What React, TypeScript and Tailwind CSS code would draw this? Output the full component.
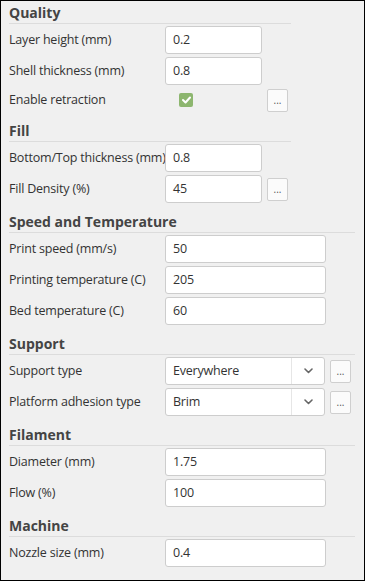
import { ReactNode } from 'react'

const font = { fontFamily: '"Open Sans", "Noto Sans", sans-serif' }

function Section({ title, first, wide, children }: { title: string; first?: boolean; wide?: boolean; children: ReactNode }) {
  return (
    <div className={wide ? 'w-[346px]' : 'w-[282px]'}>
      <div
        className={`${first ? 'h-[23px]' : 'h-[30px]'} flex items-end border-b border-[#dcdcdc] text-[14px] leading-[20px] font-bold text-[#444]`}
      >
        {title}
      </div>
      <div className="flex flex-col gap-[3px] pt-[2px]">{children}</div>
    </div>
  )
}

function DotsButton() {
  return (
    <button className="ml-[5px] flex h-[23px] w-[21px] items-center justify-center rounded-[2px] border border-[#cfcfcf] bg-[#fbfbfb] text-[10px] leading-none text-[#555]">
      ...
    </button>
  )
}

function Label({ text }: { text: string }) {
  return <div className="w-[156px] shrink-0 whitespace-nowrap text-[12.5px] tracking-[-0.2px] text-[#333]">{text}</div>
}

function Row({ label, children }: { label: string; children: ReactNode }) {
  return (
    <div className="flex h-[28px] items-center">
      <Label text={label} />
      {children}
    </div>
  )
}

function TextField({ value, wide }: { value: string; wide?: boolean }) {
  return (
    <div
      className={`${wide ? 'w-[161px]' : 'w-[97px]'} flex h-[28px] items-center rounded-[3px] border border-[#cdcdcd] bg-white px-[7px] text-[12.5px] tracking-[-0.2px] text-[#333]`}
    >
      {value}
    </div>
  )
}

function SelectField({ value }: { value: string }) {
  return (
    <div className="flex h-[28px] w-[160px] items-center rounded-[3px] border border-[#cdcdcd] bg-white text-[12.5px] tracking-[-0.2px] text-[#333]">
      <div className="flex-1 px-[7px]">{value}</div>
      <div className="flex h-full w-[33px] items-center justify-center border-l border-[#e6e6e6]">
        <svg width="9" height="6" viewBox="0 0 9 6" fill="none" stroke="#666" strokeWidth="1.6">
          <path d="M1 1l3.5 3.5L8 1" strokeLinecap="round" strokeLinejoin="round" />
        </svg>
      </div>
    </div>
  )
}

export default function App() {
  return (
    <div className="h-[581px] w-[365px] border border-black bg-[#f0f0f0] pl-[8px]" style={font}>
      <Section title="Quality" first>
        <Row label="Layer height (mm)">
          <TextField value="0.2" />
        </Row>
        <Row label="Shell thickness (mm)">
          <TextField value="0.8" />
        </Row>
        <div className="flex h-[24px] items-center">
          <Label text="Enable retraction" />
          <div className="flex w-[97px] pl-[14px]">
            <span className="flex h-[14px] w-[14px] items-center justify-center rounded-[2px] bg-[#8db66f]">
              <svg width="9" height="8" viewBox="0 0 9 8" fill="none" stroke="white" strokeWidth="2">
                <path d="M1 4l2.5 2.5L8 1.5" strokeLinecap="round" strokeLinejoin="round" />
              </svg>
            </span>
          </div>
          <DotsButton />
        </div>
      </Section>

      <Section title="Fill">
        <Row label="Bottom/Top thickness (mm)">
          <TextField value="0.8" />
        </Row>
        <Row label="Fill Density (%)">
          <TextField value="45" />
          <DotsButton />
        </Row>
      </Section>

      <Section title="Speed and Temperature" wide>
        <Row label="Print speed (mm/s)">
          <TextField value="50" wide />
        </Row>
        <Row label="Printing temperature (C)">
          <TextField value="205" wide />
        </Row>
        <Row label="Bed temperature (C)">
          <TextField value="60" wide />
        </Row>
      </Section>

      <Section title="Support" wide>
        <Row label="Support type">
          <SelectField value="Everywhere" />
          <DotsButton />
        </Row>
        <Row label="Platform adhesion type">
          <SelectField value="Brim" />
          <DotsButton />
        </Row>
      </Section>

      <Section title="Filament" wide>
        <Row label="Diameter (mm)">
          <TextField value="1.75" wide />
        </Row>
        <Row label="Flow (%)">
          <TextField value="100" wide />
        </Row>
      </Section>

      <Section title="Machine" wide>
        <Row label="Nozzle size (mm)">
          <TextField value="0.4" wide />
        </Row>
      </Section>
    </div>
  )
}
